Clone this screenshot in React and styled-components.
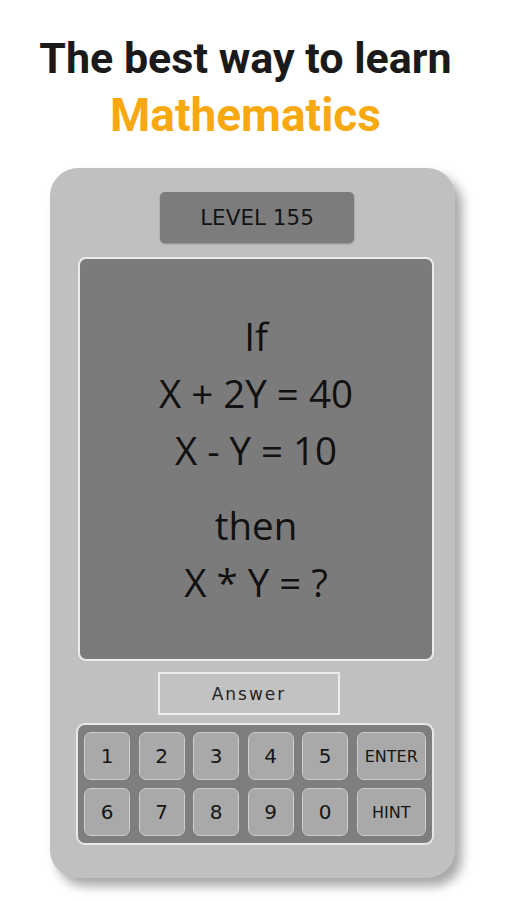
import React from 'react';
import styled, { createGlobalStyle } from 'styled-components';

const GlobalStyle = createGlobalStyle`
  body {
    margin: 0;
    background: #ffffff;
    font-family: 'Roboto', 'Liberation Sans', sans-serif;
  }
`;

const keysTop = ['1', '2', '3', '4', '5'];
const keysBottom = ['6', '7', '8', '9', '0'];

const App = () => {
  return (
    <Page>
      <GlobalStyle />
      <Heading>
        <Title>The best way to learn</Title>
        <Accent>Mathematics</Accent>
      </Heading>
      <Device>
        <LevelBox>LEVEL 155</LevelBox>
        <Screen>
          <Line>If</Line>
          <Line>X + 2Y = 40</Line>
          <Line>X - Y = 10</Line>
          <Line $gap>then</Line>
          <Line>X * Y = ?</Line>
        </Screen>
        <AnswerBox>Answer</AnswerBox>
        <Keypad>
          {keysTop.map((k) => (
            <Key key={k}>{k}</Key>
          ))}
          <Key $wide>ENTER</Key>
          {keysBottom.map((k) => (
            <Key key={k}>{k}</Key>
          ))}
          <Key $wide>HINT</Key>
        </Keypad>
      </Device>
    </Page>
  );
};

const Page = styled.div`
  width: 506px;
  height: 900px;
  display: flex;
  flex-direction: column;
  align-items: flex-start;
  box-sizing: border-box;
  padding-top: 32px;
`;
const Heading = styled.div`
  width: 491px;
  display: flex;
  flex-direction: column;
  align-items: center;
  font-family: 'Roboto', sans-serif;
  font-weight: 700;
`;
const Title = styled.div`
  font-size: 43px;
  line-height: 52px;
  color: #1a1a1a;
`;
const Accent = styled.div`
  font-size: 46px;
  line-height: 62px;
  color: #f9a910;
`;
const Device = styled.div`
  margin: 22px 0 0 50px;
  width: 405px;
  height: 710px;
  box-sizing: border-box;
  padding: 24px 21px 0 28px;
  background: #c0c0c0;
  border-radius: 28px;
  box-shadow: 7px 8px 11px rgba(0, 0, 0, 0.35);
  display: flex;
  flex-direction: column;
  align-items: center;
`;
const LevelBox = styled.div`
  width: 194px;
  height: 51px;
  margin-left: 2px;
  background: #7c7c7c;
  border-radius: 5px;
  box-shadow: 0 1px 2px rgba(0, 0, 0, 0.3);
  display: flex;
  align-items: center;
  justify-content: center;
  font-family: 'DejaVu Sans', 'Verdana', sans-serif;
  font-size: 21.5px;
  color: #141414;
`;
const Screen = styled.div`
  margin-top: 14px;
  width: 356px;
  height: 404px;
  box-sizing: border-box;
  background: #7b7b7b;
  border: 2px solid #ececec;
  border-radius: 8px;
  display: flex;
  flex-direction: column;
  align-items: center;
  justify-content: center;
  font-family: 'Open Sans', sans-serif;
  font-size: 38.5px;
  color: #111111;
`;
const Line = styled.div`
  line-height: 57px;
  margin-top: ${(p) => (p.$gap ? '18px' : '0')};
`;
const AnswerBox = styled.div`
  margin-top: 11px;
  margin-right: 14px;
  width: 182px;
  height: 43px;
  box-sizing: border-box;
  border: 2px solid #ededed;
  background: #c2c2c2;
  display: flex;
  align-items: center;
  justify-content: center;
  font-family: 'DejaVu Sans', sans-serif;
  font-size: 17px;
  letter-spacing: 2px;
  color: #242424;
`;
const Keypad = styled.div`
  margin-top: 8px;
  margin-right: 2px;
  width: 358px;
  height: 122px;
  box-sizing: border-box;
  padding: 7px 6px;
  background: #7e7e7e;
  border: 2px solid #e8e8e8;
  border-radius: 9px;
  display: grid;
  grid-template-columns: repeat(5, 46px) 1fr;
  grid-template-rows: 48px 48px;
  column-gap: 8.5px;
  row-gap: 8px;
`;
const Key = styled.div`
  background: #a9a9a9;
  border: 1px solid #cdcdcd;
  border-radius: 7px;
  display: flex;
  align-items: center;
  justify-content: center;
  font-family: 'DejaVu Sans', sans-serif;
  font-size: ${(p) => (p.$wide ? '16px' : '20px')};
  color: #161616;
`;

export default App;
